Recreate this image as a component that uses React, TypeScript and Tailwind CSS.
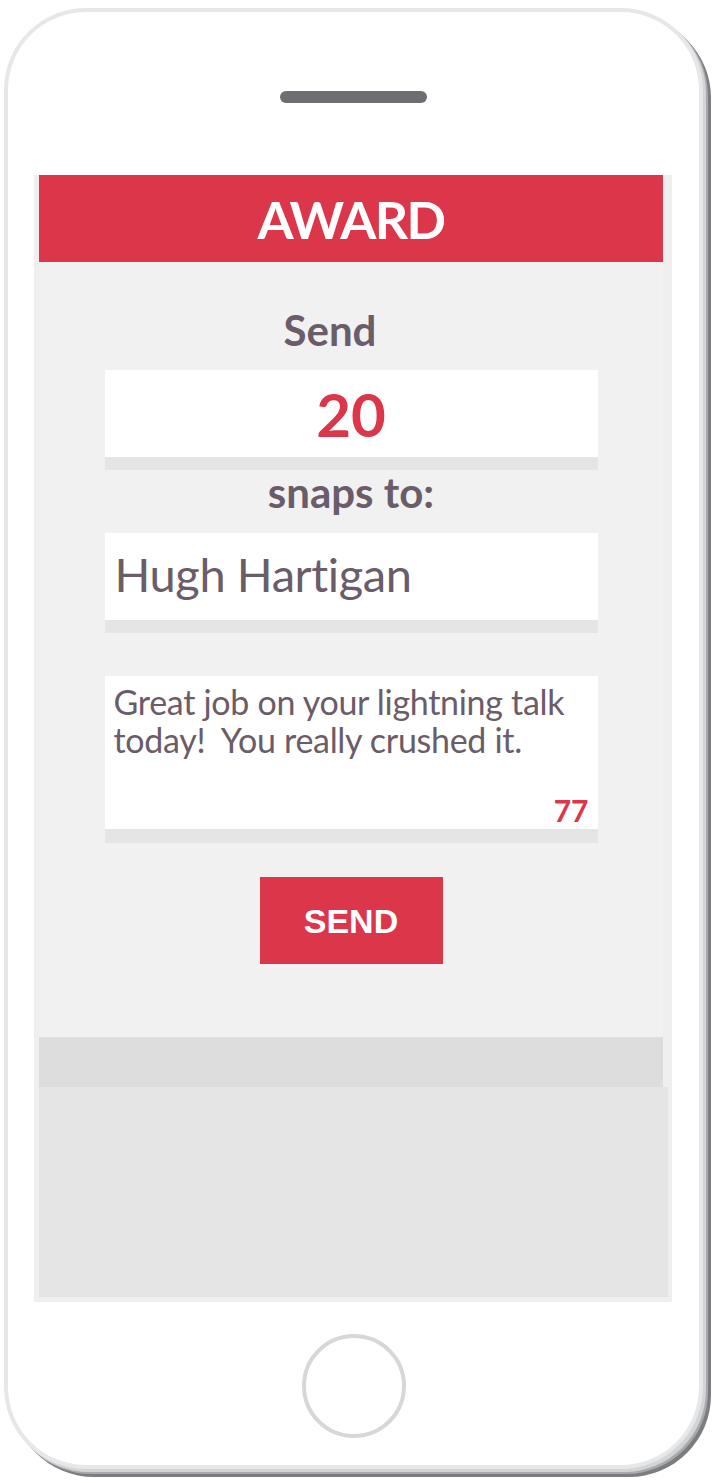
import React from 'react';

const label = "font-['Lato',sans-serif] font-bold text-[#6a5c69] leading-none";

export default function App() {
    return (
        <div className="w-[714px] h-[1483px] bg-white pl-[4px] pt-[8px]">
            <div className="w-[699px] h-[1461px] rounded-[82px] border-[4px] border-[#e6e7e8] bg-white flex flex-col items-center shadow-[3px_3px_0_#d3d4d6,5px_5px_0_#a8a9ab,8px_8px_0_#7c7d80]">
                {/* speaker */}
                <div className="mt-[79px] w-[147px] h-[12px] rounded-full bg-[#6d6e71]" />

                {/* screen */}
                <div className="mt-[72px] self-start ml-[26px] w-[638px] bg-[#efefef] pl-[5px] pb-[5px] flex flex-col">
                    <div className="w-[624px] h-[87px] bg-[#db3649] flex items-center justify-center">
                        <h1 className="font-['Lato',sans-serif] font-bold text-white text-[52px] leading-none tracking-[-1.6px]">AWARD</h1>
                    </div>

                    <div className="w-[624px] h-[775px] bg-[#f1f1f1] flex flex-col items-center">
                        <div className={`${label} mt-[47px] h-[42px] text-[42px] mr-[42px]`}>Send</div>

                        <div className="mt-[19px] w-[493px] h-[100px] bg-white border-b-[13px] border-[#e5e5e5] flex items-center justify-center">
                            <span className="font-['Lato',sans-serif] font-bold text-[#db3649] text-[60px] leading-none">20</span>
                        </div>

                        <div className={`${label} h-[63px] pt-[1px] text-[42px]`}>snaps to:</div>

                        <div className="w-[493px] h-[100px] bg-white border-b-[13px] border-[#e5e5e5] flex items-center pl-[10px] pb-[4px]">
                            <span className="font-['Lato',sans-serif] text-[#6a5c69] text-[47px] leading-none tracking-[-0.4px]">Hugh Hartigan</span>
                        </div>

                        <div className="mt-[43px] w-[493px] h-[167px] bg-white border-b-[14px] border-[#e5e5e5] flex flex-col justify-between pt-[7px] pl-[9px] pr-[9px] pb-[4px]">
                            <p className="font-['Lato',sans-serif] text-[#6a5c69] text-[34px] leading-[38px] whitespace-pre tracking-[-0.3px]">
                                {'Great job on your lightning talk\ntoday!  You really crushed it.'}
                            </p>
                            <span className="self-end font-['Lato',sans-serif] font-bold text-[#db3649] text-[30px] leading-none">77</span>
                        </div>

                        <button
                            type="button"
                            className="mt-[34px] w-[183px] h-[87px] bg-[#db3649] text-white font-['Liberation_Sans',Arial,sans-serif] font-bold text-[34px] leading-none"
                        >
                            SEND
                        </button>
                    </div>

                    <div className="w-[624px] h-[50px] bg-[#dddddd]" />
                    <div className="w-[629px] h-[210px] bg-[#e5e5e5]" />
                </div>

                {/* home button */}
                <div className="mt-[32px] w-[104px] h-[104px] rounded-full border-[4px] border-[#d6d7d8]" />
            </div>
        </div>
    );
}
